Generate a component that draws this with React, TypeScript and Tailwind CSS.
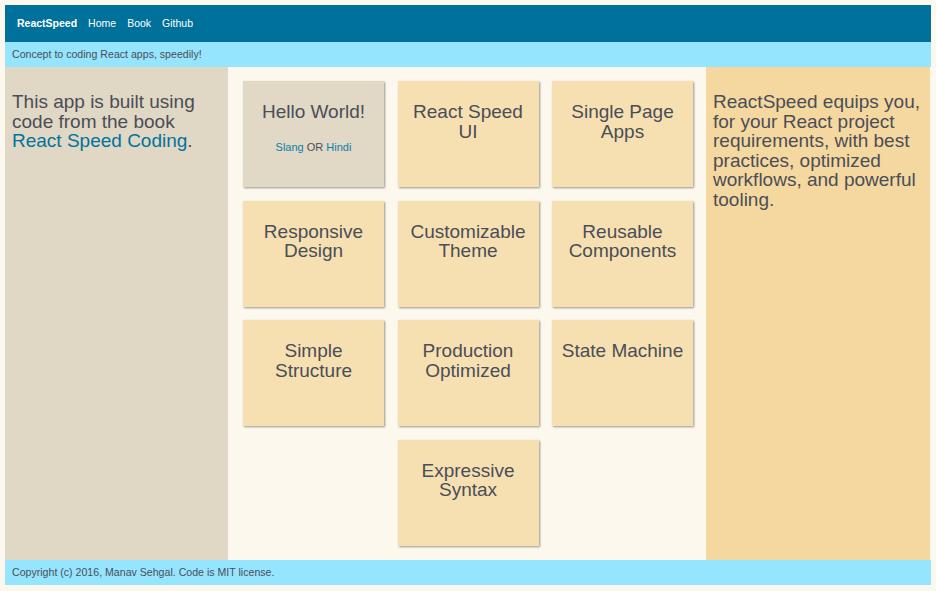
import React from 'react';

const features = [
  'React Speed UI',
  'Single Page Apps',
  'Responsive Design',
  'Customizable Theme',
  'Reusable Components',
  'Simple Structure',
  'Production Optimized',
  'State Machine',
];

const Card: React.FC<{ children: React.ReactNode; muted?: boolean; className?: string }> = ({
  children,
  muted = false,
  className = '',
}) => (
  <div
    className={`w-[141px] h-[106px] px-1 pt-[21px] text-center shadow-[1px_1px_2px_rgba(0,0,0,0.4)] ${
      muted ? 'bg-[#e1d8c6]' : 'bg-[#f6e0b2]'
    } ${className}`}
  >
    {children}
  </div>
);

export default function App() {
  return (
    <div className="min-h-screen bg-[#fdf8ee] p-[5px] text-[#4a4e57]" style={{ fontFamily: '"Liberation Sans", Arial, sans-serif' }}>
      <nav className="h-[37px] bg-[#00719b] flex items-center gap-[11px] px-3 text-[10.5px] text-white">
        <span className="font-bold">ReactSpeed</span>
        <span>Home</span>
        <span>Book</span>
        <span>Github</span>
      </nav>
      <div className="h-[25px] bg-[#95e5fe] flex items-center px-[7px] text-[10.6px]">
        Concept to coding React apps, speedily!
      </div>

      <main className="flex h-[493px]">
        <aside className="w-[223px] bg-[#e0d7c5] px-[7px] pt-[25px] text-[19px] leading-[19.6px]">
          This app is built using code from the book{' '}
          <span className="text-[#00739c]">React Speed Coding</span>.
        </aside>

        <section className="w-[478px] pl-[15px] pt-[14px]">
          <div className="grid grid-cols-[141px_141px_141px] gap-x-[13.5px] gap-y-[13.5px]">
            <Card muted>
              <div className="text-[19px] leading-[19.5px]">Hello World!</div>
              <div className="mt-[19px] text-[11px] leading-[13px]">
                <span className="text-[#0a80a8]">Slang</span> OR <span className="text-[#0a80a8]">Hindi</span>
              </div>
            </Card>
            {features.map((f) => (
              <Card key={f}>
                <div className="text-[19px] leading-[19.5px]">{f}</div>
              </Card>
            ))}
            <Card className="col-start-2">
              <div className="text-[19px] leading-[19.5px]">Expressive Syntax</div>
            </Card>
          </div>
        </section>

        <aside className="w-[224px] bg-[#f5d8a0] px-[7px] pt-[25px] text-[19px] leading-[19.6px]">
          ReactSpeed equips you, for your React project requirements, with best practices, optimized workflows, and powerful tooling.
        </aside>
      </main>

      <footer className="h-[25px] bg-[#95e5fe] flex items-center px-[7px] text-[10.6px]">
        Copyright (c) 2016, Manav Sehgal. Code is MIT license.
      </footer>
    </div>
  );
}
